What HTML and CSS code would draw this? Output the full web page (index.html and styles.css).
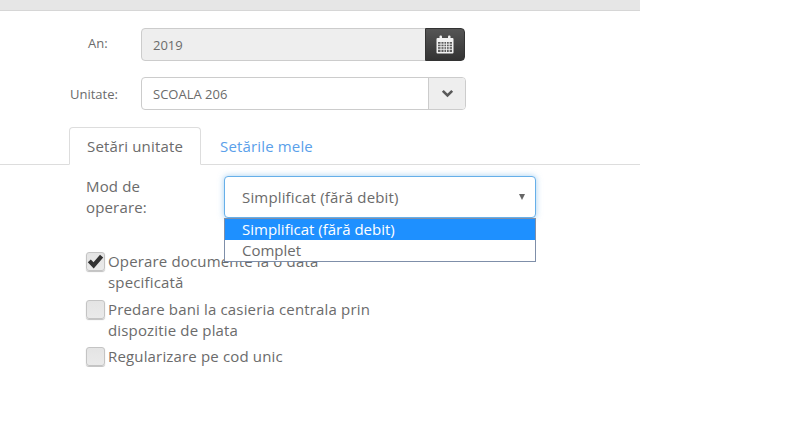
FILE: index.html
```html
<!DOCTYPE html>
<html lang="ro">

<head>
  <meta charset="UTF-8">
  <title>Setări</title>
  <link rel="stylesheet" href="styles.css">
</head>

<body>
  <div class="page">
    <div class="topbar"></div>

    <div class="row row-an">
      <label class="row-label label-an">An:</label>
      <div class="input-group">
        <input type="text" class="field field-readonly" value="2019" readonly>
        <button class="btn-calendar">
          <svg width="18" height="19" viewBox="0 0 18 19">
            <path d="M1.500 3h15a1 1 0 0 1 1 1v13.500a1 1 0 0 1-1 1h-15a1 1 0 0 1-1-1V4a1 1 0 0 1 1-1z" fill="#f2f2f2"/>
            <rect x="3.500" y="0.500" width="2.500" height="4.500" rx="1" fill="#f2f2f2"/>
            <rect x="12" y="0.500" width="2.500" height="4.500" rx="1" fill="#f2f2f2"/>
            <path d="M2 7h14v10H2z" fill="#5c5c5c"/>
            <path d="M2 9.200h14M2 11.700h14M2 14.300h14M5 7v10M8 7v10M10.500 7v10M13.200 7v10" stroke="#f2f2f2" stroke-width="0.900" fill="none"/>
          </svg>
        </button>
      </div>
    </div>

    <div class="row row-unitate">
      <label class="row-label label-unitate">Unitate:</label>
      <div class="combo">
        <span class="combo-value">SCOALA 206</span>
        <span class="combo-arrow">
          <svg width="13" height="9" viewBox="0 0 13 9">
            <path d="M1.800 1.800l4.700 4.700 4.700-4.700" stroke="#595959" stroke-width="2.600" fill="none"/>
          </svg>
        </span>
      </div>
    </div>

    <ul class="tabs">
      <li class="tab tab-active">Setări unitate</li>
      <li class="tab">Setările mele</li>
    </ul>

    <div class="tab-body">
      <div class="mod-row">
        <label class="mod-label">Mod de operare:</label>
        <div class="select-wrap">
          <div class="select-box">
            <span>Simplificat (fără debit)</span>
            <span class="select-caret"></span>
          </div>
          <ul class="select-list">
            <li class="option option-selected">Simplificat (fără debit)</li>
            <li class="option">Complet</li>
          </ul>
        </div>
      </div>

      <div class="check check-first">
        <span class="check-box">
          <svg width="17" height="15" viewBox="0 0 17 15">
            <path d="M0.800 8.300l3-2.800 2.700 2.700L13 0.800l3.200 2.700-9.500 11z" fill="#333"/>
          </svg>
        </span>
        <span class="check-text">Operare documente la o data specificată</span>
      </div>
      <div class="check">
        <span class="check-box"></span>
        <span class="check-text">Predare bani la casieria centrala prin dispozitie de plata</span>
      </div>
      <div class="check check-last">
        <span class="check-box"></span>
        <span class="check-text">Regularizare pe cod unic</span>
      </div>
    </div>
  </div>
</body>

</html>
```

FILE: styles.css
```css
* {
  margin: 0;
  padding: 0;
  list-style: none;
  box-sizing: border-box;
}

body {
  background: #fff;
  font-family: "Open Sans", sans-serif;
  font-size: 15px;
  letter-spacing: .16px;
  color: #6b6b6b;
  overflow: hidden;
}

.page {
  width: 640px;
}

.topbar {
  height: 11px;
  background: #e6e6e6;
  border-bottom: 1px solid #d6d6d6;
}

.row {
  display: flex;
  align-items: center;
}

.row-an {
  margin-top: 17px;
}

.row-unitate {
  margin-top: 16px;
}

.row-label {
  width: 141px;
  font-size: 13px;
  letter-spacing: 0;
}

.label-an {
  padding: 0 0 3px 88px;
}

.label-unitate {
  padding-left: 70px;
}

.input-group {
  display: flex;
  width: 324px;
}

.field {
  flex: 1;
  min-width: 0;
  height: 33px;
  padding: 0 11px;
  border: 1px solid #ccc;
  border-radius: 4px 0 0 4px;
  font-family: inherit;
  font-size: 13px;
  color: #6b6b6b;
  outline: none;
}

.field-readonly {
  background: #eee;
}

.btn-calendar {
  width: 40px;
  height: 33px;
  margin-left: -1px;
  display: flex;
  align-items: center;
  justify-content: center;
  border: 1px solid #333;
  border-radius: 0 4px 4px 0;
  background: linear-gradient(#555, #333);
}

.combo {
  display: flex;
  width: 325px;
  height: 33px;
  border: 1px solid #ccc;
  border-radius: 4px;
  font-size: 13px;
  letter-spacing: 0;
}

.combo-value {
  flex: 1;
  padding-left: 11px;
  line-height: 32px;
}

.combo-arrow {
  width: 37px;
  display: flex;
  align-items: center;
  justify-content: center;
  background: #eee;
  border-left: 1px solid #ccc;
  border-radius: 0 3px 3px 0;
}

.tabs {
  display: flex;
  margin-top: 17px;
  padding-left: 69px;
  height: 38px;
  border-bottom: 1px solid #ddd;
}

.tab {
  height: 38px;
  padding: 0 19px;
  line-height: 38px;
  color: #5aa0ea;
}

.tab-active {
  width: 132px;
  padding: 0 0 0 17px;
  color: #6b6b6b;
  background: #fff;
  border: 1px solid #ddd;
  border-bottom-color: #fff;
  border-radius: 4px 4px 0 0;
  line-height: 36px;
}

.tab-body {
  padding: 11px 0 0 86px;
}

.mod-row {
  display: flex;
}

.mod-label {
  width: 138px;
  padding-right: 50px;
  line-height: 21px;
}

.select-wrap {
  position: relative;
  width: 312px;
}

.select-box {
  display: flex;
  justify-content: space-between;
  align-items: center;
  height: 42px;
  padding: 0 10px 0 17px;
  border: 1px solid #66afe9;
  border-radius: 4px;
  box-shadow: 0 0 6px rgba(102, 175, 233, .6);
  background: #fff;
}

.select-caret {
  border-left: 3px solid transparent;
  border-right: 3px solid transparent;
  border-top: 6px solid #666;
}

.select-list {
  position: absolute;
  top: 42px;
  left: 0;
  right: 0;
  z-index: 2;
  background: #fff;
  border: 1px solid #7f8fa9;
  letter-spacing: 0;
}

.option {
  height: 21px;
  padding-left: 17px;
  line-height: 21px;
}

.option-selected {
  background: #1e90ff;
  color: #fff;
}

.check {
  display: flex;
  width: 290px;
  margin-top: 6px;
  line-height: 21px;
}

.check-first {
  margin-top: 33px;
}

.check-last {
  margin-top: 5px;
}

.check-box {
  flex: none;
  width: 19px;
  height: 19px;
  margin: 1px 3px 0 0;
  display: flex;
  align-items: center;
  justify-content: center;
  border: 1px solid #c4c4c4;
  border-radius: 3px;
  background: linear-gradient(#e4e4e4, #eaeaea);
  box-shadow: 0 1px 1px rgba(0, 0, 0, .25);
}
```
